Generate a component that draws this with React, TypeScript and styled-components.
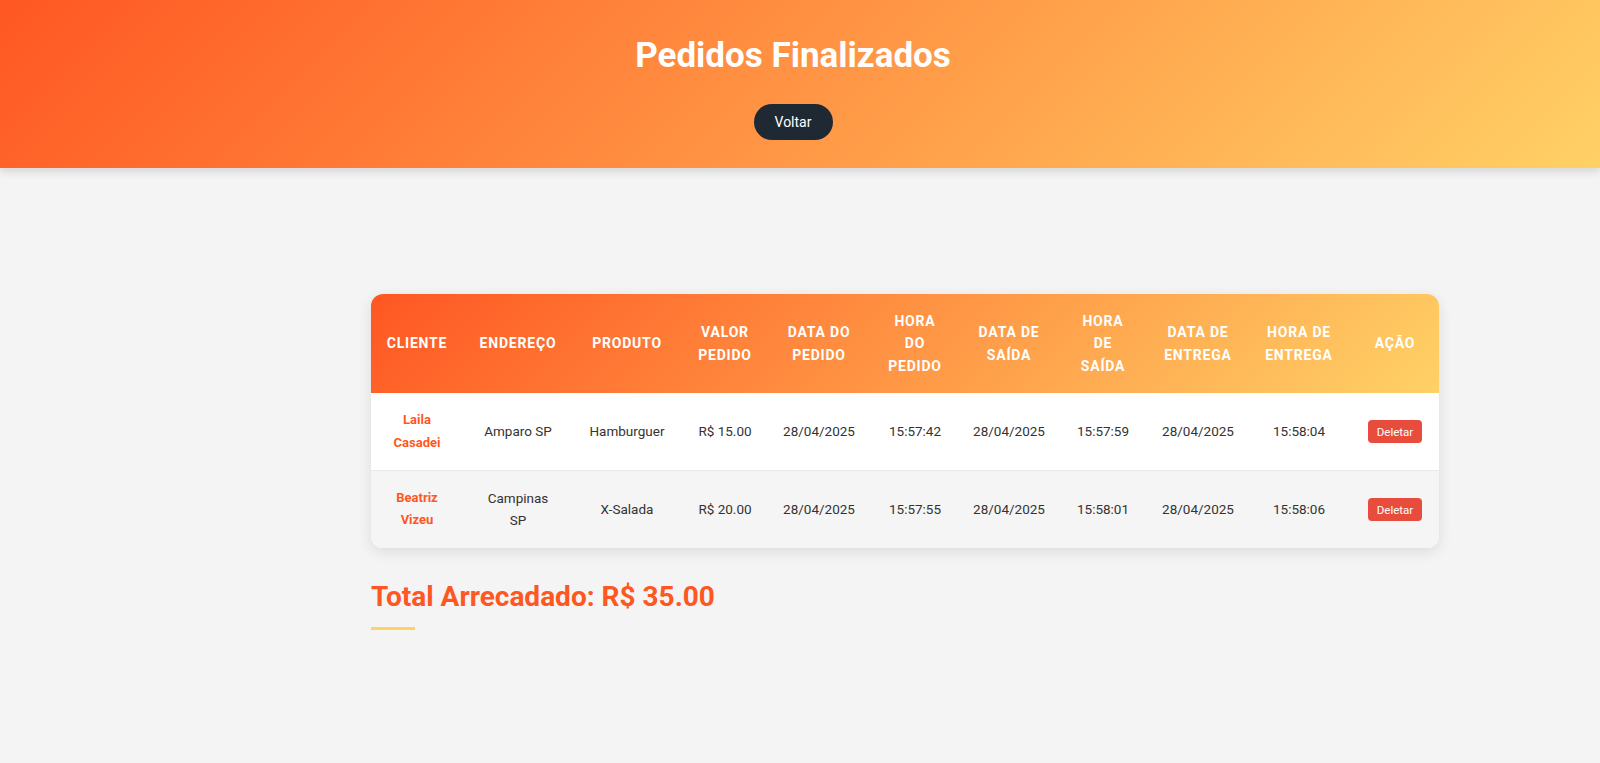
import React from "react";
import styled, { createGlobalStyle } from "styled-components";

const GlobalStyle = createGlobalStyle`
  * { box-sizing: border-box; }
  html, body { margin: 0; padding: 0; }
  body {
    background: #f4f4f4;
    font-family: Roboto, "Noto Sans", "Liberation Sans", sans-serif;
    color: #333;
  }
`;

const Header = styled.header`
  height: 168px;
  background: linear-gradient(135deg, #ff5722 0%, #ffd166 100%);
  box-shadow: 0 4px 8px rgba(0, 0, 0, 0.12);
  display: flex;
  flex-direction: column;
  align-items: center;
  padding: 35px 14px 0 0;
`;

const Title = styled.h1`
  margin: 0;
  color: #fff;
  font-size: 35px;
  font-weight: 700;
  line-height: 42px;
`;

const BackButton = styled.button`
  margin-top: 27px;
  height: 36px;
  width: 79px;
  border: none;
  border-radius: 18px;
  background: #1f2933;
  color: #fff;
  font-family: Roboto, "Liberation Sans", sans-serif;
  font-size: 14px;
  cursor: pointer;
`;

const Main = styled.main`
  padding: 126px 161px 0 371px;
`;

const TableCard = styled.div`
  border-radius: 12px;
  overflow: hidden;
  background: #fff;
  box-shadow: 0 4px 14px rgba(0, 0, 0, 0.1);
`;

const Table = styled.table`
  width: 100%;
  border-collapse: collapse;
  table-layout: fixed;
  font-size: 14px;
  line-height: 22.4px;
`;

const Head = styled.thead`
  background: linear-gradient(135deg, #ff5722 0%, #ffd166 100%);
`;

const Th = styled.th`
  padding: 16px 15px;
  color: #fff;
  font-weight: 700;
  text-transform: uppercase;
  letter-spacing: 0.8px;
  text-align: center;
  vertical-align: middle;
`;

const Row = styled.tr<{ $alt?: boolean }>`
  background: ${(p) => (p.$alt ? "#f5f5f5" : "#ffffff")};
  border-bottom: ${(p) => (p.$alt ? "none" : "1px solid #e9e9e9")};
`;

const Td = styled.td`
  padding: 16px 10px;
  text-align: center;
  vertical-align: middle;
  color: #333;
  font-size: 13.5px;
`;

const ClientTd = styled(Td)`
  color: #ff5722;
  font-weight: 700;
  font-size: 13px;
`;

const AddressTd = styled(Td)`
  padding: 16px 17px;
`;

const DeleteButton = styled.button`
  background: #e74c3c;
  color: #fff;
  border: none;
  border-radius: 4px;
  font-family: Roboto, "Liberation Sans", sans-serif;
  font-size: 11.5px;
  height: 23px;
  width: 54px;
  padding: 0;
  cursor: pointer;
`;

const Total = styled.h2`
  margin: 31px 0 0 0;
  color: #ff5722;
  font-size: 28px;
  font-weight: 700;
  line-height: 36px;
`;

const Underline = styled.div`
  margin-top: 12px;
  width: 44px;
  height: 3px;
  background: #ffd166;
`;

const columns: { label: string; width: number }[] = [
  { label: "Cliente", width: 92 },
  { label: "Endereço", width: 110 },
  { label: "Produto", width: 108 },
  { label: "Valor Pedido", width: 88 },
  { label: "Data do Pedido", width: 100 },
  { label: "Hora do Pedido", width: 92 },
  { label: "Data de Saída", width: 96 },
  { label: "Hora de Saída", width: 92 },
  { label: "Data de Entrega", width: 98 },
  { label: "Hora de Entrega", width: 104 },
  { label: "Ação", width: 88 },
];

const orders = [
  {
    cliente: "Laila Casadei",
    endereco: "Amparo SP",
    produto: "Hamburguer",
    valor: "R$ 15.00",
    dataPedido: "28/04/2025",
    horaPedido: "15:57:42",
    dataSaida: "28/04/2025",
    horaSaida: "15:57:59",
    dataEntrega: "28/04/2025",
    horaEntrega: "15:58:04",
  },
  {
    cliente: "Beatriz Vizeu",
    endereco: "Campinas SP",
    produto: "X-Salada",
    valor: "R$ 20.00",
    dataPedido: "28/04/2025",
    horaPedido: "15:57:55",
    dataSaida: "28/04/2025",
    horaSaida: "15:58:01",
    dataEntrega: "28/04/2025",
    horaEntrega: "15:58:06",
  },
];

export default function App() {
  return (
    <>
      <GlobalStyle />
      <Header>
        <Title>Pedidos Finalizados</Title>
        <BackButton>Voltar</BackButton>
      </Header>
      <Main>
        <TableCard>
          <Table>
            <colgroup>
              {columns.map((c) => (
                <col key={c.label} style={{ width: c.width }} />
              ))}
            </colgroup>
            <Head>
              <tr>
                {columns.map((c) => (
                  <Th key={c.label}>{c.label}</Th>
                ))}
              </tr>
            </Head>
            <tbody>
              {orders.map((o, i) => (
                <Row key={o.cliente} $alt={i % 2 === 1}>
                  <ClientTd>{o.cliente}</ClientTd>
                  <AddressTd>{o.endereco}</AddressTd>
                  <Td>{o.produto}</Td>
                  <Td>{o.valor}</Td>
                  <Td>{o.dataPedido}</Td>
                  <Td>{o.horaPedido}</Td>
                  <Td>{o.dataSaida}</Td>
                  <Td>{o.horaSaida}</Td>
                  <Td>{o.dataEntrega}</Td>
                  <Td>{o.horaEntrega}</Td>
                  <Td>
                    <DeleteButton>Deletar</DeleteButton>
                  </Td>
                </Row>
              ))}
            </tbody>
          </Table>
        </TableCard>
        <Total>Total Arrecadado: R$ 35.00</Total>
        <Underline />
      </Main>
    </>
  );
}
